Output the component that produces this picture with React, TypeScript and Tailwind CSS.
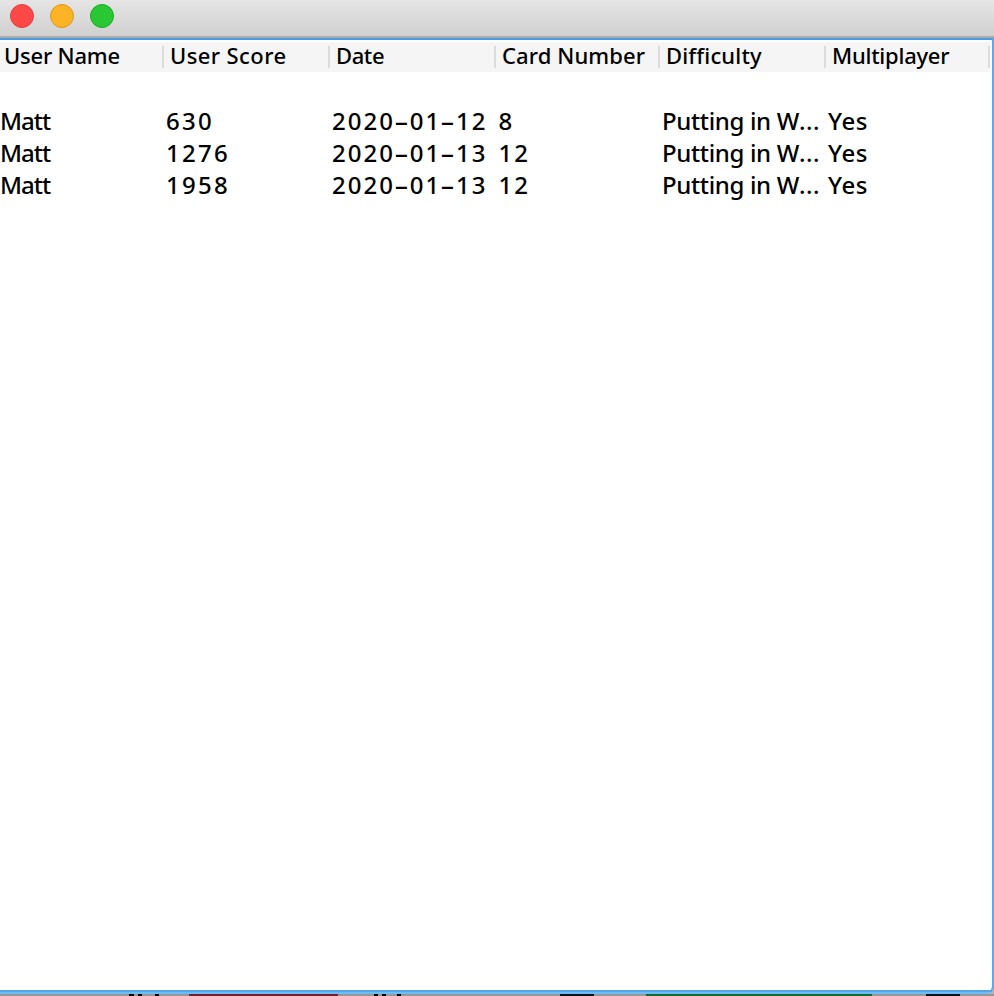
type Cell = { text: string; cls: string };

const headers: Cell[] = [
  { text: 'User Name', cls: 'w-[164px] pl-1 tracking-[-0.2px]' },
  { text: 'User Score', cls: 'w-[166px] pl-[6px] tracking-[0.4px]' },
  { text: 'Date', cls: 'w-[166px] pl-[6px] tracking-[-0.4px]' },
  { text: 'Card Number', cls: 'w-[164px] pl-[6px] tracking-[0.1px]' },
  { text: 'Difficulty', cls: 'w-[166px] pl-[6px] tracking-[0.15px]' },
  { text: 'Multiplayer', cls: 'w-[164px] pl-[6px] tracking-[-0.25px]' },
];

const rows: string[][] = [
  ['Matt', '630', '2020-01-12', '8', 'Putting in W...', 'Yes'],
  ['Matt', '1276', '2020-01-13', '12', 'Putting in W...', 'Yes'],
  ['Matt', '1958', '2020-01-13', '12', 'Putting in W...', 'Yes'],
];

const cellClass = [
  'w-[166px] tracking-[-1px]',
  'w-[166px] tracking-[2.3px]',
  'w-[166.5px] tracking-[2px]',
  'w-[163.5px] tracking-[2.1px]',
  'w-[166px] tracking-[-0.35px]',
  'w-[160px] tracking-[0.6px]',
];

// Hyphens occupy a full digit's width and the ellipsis is spaced more loosely than letters.
function CellText({ text }: { text: string }) {
  return (
    <>
      {text.split(/(-|\.\.\.)/).map((part, i) => {
        if (part === '-') {
          return <span key={i} className="inline-block w-[14.8px] -translate-x-px scale-x-[1.85] text-center tracking-normal">-</span>;
        }
        if (part === '...') {
          return <span key={i} className="tracking-[0.5px]">...</span>;
        }
        return part;
      })}
    </>
  );
}

export default function App() {
  return (
    <div className="flex h-[996px] w-[994px] flex-col overflow-hidden bg-[#b5b5b5] font-['Noto_Sans',sans-serif] text-black">
      <div className="flex h-[38px] shrink-0 gap-4 border-b-2 border-[#ababab] bg-linear-to-b from-[#e5e5e5] to-[#d0d0d0] pt-1 pl-[10px]">
        <span className="size-6 rounded-full border border-[#e2403e] bg-[#fd4848]" />
        <span className="size-6 rounded-full border border-[#de981e] bg-[#fdb326]" />
        <span className="size-6 rounded-full border border-[#1dac27] bg-[#29c733]" />
      </div>
      <div className="flex h-[956px] shrink-0 flex-col rounded-br-lg border-t-2 border-r-2 border-b-2 border-t-[#4c9be0] border-r-[#5aaaf0] border-b-[#6cbcf8] bg-white">
        <div className="mt-[2px] flex h-[30px] w-[990px] shrink-0 items-center bg-[#f5f5f5]">
          {headers.map((h) => (
            <div key={h.text} className={`flex h-[22px] shrink-0 items-center border-r-2 border-[#dcdcdc] pb-1 text-[22px] leading-[22px] font-medium whitespace-nowrap ${h.cls}`}>
              {h.text}
            </div>
          ))}
        </div>
        <div className="flex flex-1 flex-col border-b-2 border-[#54a5eb] pt-[33px]">
          {rows.map((row, r) => (
            <div key={r} className="flex h-8 items-center text-[24px] leading-8 font-medium">
              {row.map((text, c) => (
                <div key={c} className={`shrink-0 whitespace-nowrap ${cellClass[c]}`}><CellText text={text} /></div>
              ))}
            </div>
          ))}
        </div>
      </div>
      <div className="flex h-[2px] shrink-0 bg-[#999795]">
        <span className="ml-[129px] w-[5px] bg-black" />
        <span className="ml-1 w-1 bg-black" />
        <span className="ml-[13px] w-1 bg-black" />
        <span className="ml-[30px] w-[149px] bg-[#741e29]" />
        <span className="ml-[36px] w-1 bg-black" />
        <span className="ml-1 w-1 bg-black" />
        <span className="ml-[11px] w-1 bg-black" />
        <span className="ml-[159px] w-[34px] bg-[#11121c]" />
        <span className="ml-[52px] w-[226px] bg-[#16682b]" />
        <span className="ml-[54px] w-[34px] bg-[#11121c]" />
      </div>
    </div>
  );
}
